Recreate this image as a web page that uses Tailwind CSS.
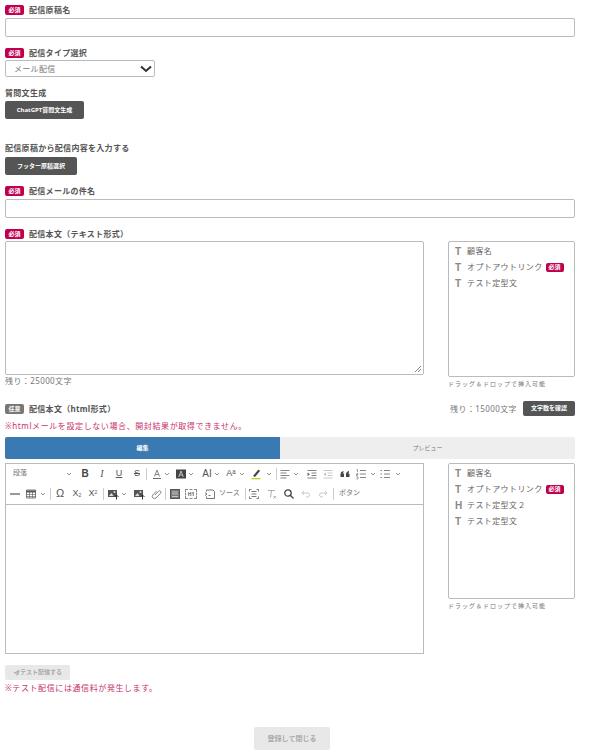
<!DOCTYPE html>
<html lang="ja">
<head>
  <meta charset="UTF-8">
  <meta name="viewport" content="width=device-width, initial-scale=1.0">
  <title>配信原稿</title>
  <script src="https://cdn.jsdelivr.net/npm/@tailwindcss/browser@4"></script>
</head>
<body class="bg-white font-['Noto_Sans','Noto_Sans_CJK_JP',sans-serif] text-[#555]">
  <div class="w-[590px] h-[755px] overflow-hidden pl-[5px] pr-[15px] pt-[5px]">

    <!-- 配信原稿名 -->
    <div class="flex items-center h-[10px]">
      <span class="w-[19px] h-[10px] rounded-[2px] bg-[#c0004e] text-white text-[6px] font-bold leading-[10px] text-center">必須</span>
      <span class="ml-[5px] text-[8px] font-bold text-[#555] tracking-[0.3px]">配信原稿名</span>
    </div>
    <div class="mt-[3px] h-[19px] border border-[#bbb] rounded-[2px]"></div>

    <!-- 配信タイプ選択 -->
    <div class="mt-[11px] flex items-center h-[10px]">
      <span class="w-[19px] h-[10px] rounded-[2px] bg-[#c0004e] text-white text-[6px] font-bold leading-[10px] text-center">必須</span>
      <span class="ml-[5px] text-[8px] font-bold text-[#555] tracking-[0.3px]">配信タイプ選択</span>
    </div>
    <div class="mt-[2px] w-[150px] h-[17px] border border-[#bbb] rounded-[2px] flex items-center justify-between pl-[8px] pr-[2px]">
      <span class="text-[8px] text-[#777] tracking-[0.3px]">メール配信</span>
      <svg width="12" height="8" viewBox="0 0 12 8" fill="none" stroke="#333" stroke-width="2"><polyline points="1,1.5 6,6 11,1.5"/></svg>
    </div>

    <!-- 質問文生成 -->
    <div class="mt-[11px] h-[10px] flex items-center text-[8px] font-bold text-[#555] tracking-[0.3px]">質問文生成</div>
    <div class="mt-[3px] w-[79px] h-[18px] bg-[#555] rounded-[2px] text-white text-[6px] font-bold leading-[18px] text-center">ChatGPT質問文生成</div>

    <!-- フッター -->
    <div class="mt-[24px] h-[10px] flex items-center text-[8px] font-bold text-[#555] tracking-[0.3px]">配信原稿から配信内容を入力する</div>
    <div class="mt-[4px] w-[72px] h-[18px] bg-[#555] rounded-[2px] text-white text-[6px] font-bold leading-[18px] text-center">フッター原稿選択</div>

    <!-- 件名 -->
    <div class="mt-[11px] flex items-center h-[10px]">
      <span class="w-[19px] h-[10px] rounded-[2px] bg-[#c0004e] text-white text-[6px] font-bold leading-[10px] text-center">必須</span>
      <span class="ml-[5px] text-[8px] font-bold text-[#555] tracking-[0.3px]">配信メールの件名</span>
    </div>
    <div class="mt-[3px] h-[19px] border border-[#bbb] rounded-[2px]"></div>

    <!-- 本文 テキスト -->
    <div class="mt-[11px] flex items-center h-[10px]">
      <span class="w-[19px] h-[10px] rounded-[2px] bg-[#c0004e] text-white text-[6px] font-bold leading-[10px] text-center">必須</span>
      <span class="ml-[5px] text-[8px] font-bold text-[#555] tracking-[0.3px]">配信本文（テキスト形式）</span>
    </div>
    <div class="mt-[2px] flex justify-between items-start">
      <div class="w-[419px]">
        <div class="relative h-[134px] border border-[#bbb] rounded-[2px]">
          <svg class="absolute right-[1px] bottom-[1px]" width="8" height="8" viewBox="0 0 8 8" stroke="#666" stroke-width="0.8"><line x1="1" y1="7" x2="7" y2="1"/><line x1="4" y1="7" x2="7" y2="4"/></svg>
        </div>
        <div class="h-[11px] leading-[11px] text-[8px] text-[#777] tracking-[0.4px]">残り：25000文字</div>
      </div>
      <div class="w-[127px]">
        <div class="h-[136px] border border-[#bbb] rounded-[2px] pt-[1px] pl-[6px] text-[8px] text-[#666] tracking-[0.4px]">
          <div class="h-[16px] flex items-center"><span class="w-[12px] text-[10px] font-bold font-['Liberation_Sans'] text-[#888]">T</span><span>顧客名</span></div>
          <div class="h-[16px] flex items-center"><span class="w-[12px] text-[10px] font-bold font-['Liberation_Sans'] text-[#888]">T</span><span>オプトアウトリンク</span><span class="ml-[3px] w-[18px] h-[9px] rounded-[2px] bg-[#c0004e] text-white text-[6px] font-bold leading-[9px] text-center tracking-normal">必須</span></div>
          <div class="h-[16px] flex items-center"><span class="w-[12px] text-[10px] font-bold font-['Liberation_Sans'] text-[#888]">T</span><span>テスト定型文</span></div>
        </div>
        <div class="mt-[3px] h-[9px] leading-[9px] text-[6px] text-[#777] tracking-[1px]">ドラッグ＆ドロップで挿入可能</div>
      </div>
    </div>

    <!-- 本文 html -->
    <div class="mt-[12px] flex items-center justify-between h-[15px]">
      <div class="flex items-center">
        <span class="w-[19px] h-[10px] rounded-[2px] bg-[#777] text-white text-[6px] font-bold leading-[10px] text-center">任意</span>
        <span class="ml-[5px] text-[8px] font-bold text-[#555] tracking-[0.3px]">配信本文（html形式）</span>
      </div>
      <div class="flex items-center">
        <span class="text-[8px] text-[#777] tracking-[0.4px]">残り：15000文字</span>
        <span class="ml-[6px] w-[52px] h-[15px] bg-[#555] rounded-[2px] text-white text-[6px] font-bold leading-[15px] text-center">文字数を確認</span>
      </div>
    </div>
    <div class="mt-[4px] h-[11px] leading-[11px] text-[8px] text-[#c8306c] tracking-[0.6px]">※htmlメールを設定しない場合、開封結果が取得できません。</div>

    <div class="mt-[6px] flex h-[22px] bg-[#eee] rounded-[2px] text-[6px] leading-[22px] text-center">
      <div class="w-[275px] bg-[#3a7ab3] text-white font-bold rounded-l-[2px]">編集</div>
      <div class="flex-1 text-[#777]">プレビュー</div>
    </div>

    <div class="mt-[4px] flex justify-between items-start">
      <!-- エディタ -->
      <div class="w-[419px] h-[191px] border border-[#bbb]">
        <div class="h-[41px] border-b border-[#bbb] text-[#555]">
          <div class="flex items-center h-[19px]">
            <span class="w-[57px] pl-[7px] text-[7px] text-[#777]">段落</span>
            <svg class="ml-[2px] w-[8px] h-[8px]" viewBox="0 0 8 8" fill="none" stroke="#777" stroke-width="0.8"><polyline points="2,3 4,5 6,3"/></svg>
            <b class="ml-[6px] w-[12px] text-center text-[10px] leading-none font-['Liberation_Sans'] text-[#444]">B</b>
            <i class="ml-[5px] w-[12px] text-center text-[10px] leading-none font-['Liberation_Serif']">I</i>
            <u class="ml-[5px] w-[12px] text-center text-[9px] leading-none font-['Liberation_Sans']">U</u>
            <s class="ml-[6px] w-[12px] text-center text-[9px] leading-none font-['Liberation_Sans']">S</s>
            <span class="ml-[3px] w-px h-[12px] bg-[#ccc]"></span>
            <svg class="ml-[4px] w-[12px] h-[12px]" viewBox="0 0 12 12" fill="none" stroke="#666" stroke-width="0.8"><path d="M3.500 8.500 6 2l2.500 6.500M4.300 6.500h3.400"/><path d="M2 10.500h8" stroke="#444"/></svg>
            <svg class="w-[8px] h-[8px]" viewBox="0 0 8 8" fill="none" stroke="#777" stroke-width="0.8"><polyline points="2,3 4,5 6,3"/></svg>
            <svg class="ml-[4px] w-[12px] h-[12px]" viewBox="0 0 12 12"><rect x="1" y="1.500" width="10" height="9" fill="#444"/><path d="M3.700 9 6 3l2.300 6M4.500 7h3" fill="none" stroke="#ddd" stroke-width="0.8"/></svg>
            <svg class="w-[8px] h-[8px]" viewBox="0 0 8 8" fill="none" stroke="#777" stroke-width="0.8"><polyline points="2,3 4,5 6,3"/></svg>
            <span class="ml-[6px] w-[12px] text-center text-[10px] leading-none font-['Liberation_Sans']">AI</span>
            <svg class="w-[8px] h-[8px]" viewBox="0 0 8 8" fill="none" stroke="#777" stroke-width="0.8"><polyline points="2,3 4,5 6,3"/></svg>
            <span class="ml-[4px] w-[12px] text-center text-[9px] leading-none font-['Liberation_Sans']">Aᵃ</span>
            <svg class="ml-[1px] w-[8px] h-[8px]" viewBox="0 0 8 8" fill="none" stroke="#777" stroke-width="0.8"><polyline points="2,3 4,5 6,3"/></svg>
            <svg class="ml-[4px] w-[12px] h-[12px]" viewBox="0 0 12 12"><path d="M3 8 8.500 1.500l1.500 1.500L5 9z" fill="#444"/><path d="M1.500 10.700h9" stroke="#c9cc30" stroke-width="1.300"/></svg>
            <svg class="ml-[3px] w-[8px] h-[8px]" viewBox="0 0 8 8" fill="none" stroke="#777" stroke-width="0.8"><polyline points="2,3 4,5 6,3"/></svg>
            <span class="ml-[3px] w-px h-[12px] bg-[#ccc]"></span>
            <svg class="ml-[2px] w-[12px] h-[12px]" viewBox="0 0 12 12" stroke="#666" stroke-width="0.8"><path d="M1.500 2.500h9M1.500 5h6M1.500 7.500h9M1.500 10h6"/></svg>
            <svg class="ml-[1px] w-[8px] h-[8px]" viewBox="0 0 8 8" fill="none" stroke="#777" stroke-width="0.8"><polyline points="2,3 4,5 6,3"/></svg>
            <svg class="ml-[6px] w-[12px] h-[12px]" viewBox="0 0 12 12" stroke="#666" stroke-width="0.8"><path d="M1.500 2.500h9M5.500 5h5M5.500 7.500h5M1.500 10h9"/><path d="M1.500 4.500 4 6.200 1.500 8z" fill="#666" stroke="none"/></svg>
            <svg class="ml-[4px] w-[12px] h-[12px]" viewBox="0 0 12 12" stroke="#bbb" stroke-width="0.8"><path d="M1.500 2.500h9M5.500 5h5M5.500 7.500h5M1.500 10h9"/><path d="M4 4.500 1.500 6.200 4 8z" fill="#bbb" stroke="none"/></svg>
            <svg class="ml-[5px] w-[12px] h-[12px]" viewBox="0 0 12 12" fill="#444"><path d="M1.500 9V6.500C1.500 4.500 2.500 3.500 4.500 3v1.500c-.7.200-1 .5-1 1h1.500V9zM7 9V6.500C7 4.500 8 3.500 10 3v1.500c-.7.200-1 .5-1 1h1.500V9z"/></svg>
            <svg class="ml-[4px] w-[12px] h-[12px]" viewBox="0 0 12 12" stroke="#666" stroke-width="0.8"><path d="M5 2.500h6M5 6h6M5 9.500h6"/><path d="M1.500 1.500h1v2.500M1.500 5.500h1.500v1H1.500v1.500H3M1.500 9h1.500v2H1.500" fill="none" stroke-width="0.6"/></svg>
            <svg class="ml-[2px] w-[8px] h-[8px]" viewBox="0 0 8 8" fill="none" stroke="#777" stroke-width="0.8"><polyline points="2,3 4,5 6,3"/></svg>
            <svg class="ml-[2px] w-[12px] h-[12px]" viewBox="0 0 12 12" stroke="#666" stroke-width="0.8"><path d="M5 2.500h6M5 6h6M5 9.500h6M1.500 2.500h1.500M1.500 6h1.500M1.500 9.500h1.500"/></svg>
            <svg class="ml-[3px] w-[8px] h-[8px]" viewBox="0 0 8 8" fill="none" stroke="#777" stroke-width="0.8"><polyline points="2,3 4,5 6,3"/></svg>
          </div>
          <div class="flex items-center h-[21px]">
            <svg class="ml-[3px] w-[12px] h-[12px]" viewBox="0 0 12 12" stroke="#555" stroke-width="1.200"><path d="M1 6h10"/></svg>
            <svg class="ml-[4px] w-[12px] h-[12px]" viewBox="0 0 12 12" fill="none" stroke="#555" stroke-width="0.8"><path d="M1.500 2h9v8h-9z"/><path d="M1.500 3.500h9" stroke-width="2"/><path d="M1.500 6.500h9M1.500 8.500h9M4.500 3v7M7.500 3v7" stroke-width="0.6"/></svg>
            <svg class="ml-[2px] w-[8px] h-[8px]" viewBox="0 0 8 8" fill="none" stroke="#777" stroke-width="0.8"><polyline points="2,3 4,5 6,3"/></svg>
            <span class="ml-[3px] w-px h-[12px] bg-[#ccc]"></span>
            <span class="ml-[3px] w-[12px] text-center text-[11px] leading-none font-['Liberation_Sans']">Ω</span>
            <span class="ml-[5px] w-[12px] text-center text-[9px] leading-none font-['Liberation_Sans']">X<sub class="text-[5px]">2</sub></span>
            <span class="ml-[4px] w-[12px] text-center text-[9px] leading-none font-['Liberation_Sans']">X<sup class="text-[5px]">2</sup></span>
            <span class="ml-[4px] w-px h-[12px] bg-[#ccc]"></span>
            <svg class="ml-[3px] w-[12px] h-[12px]" viewBox="0 0 12 12"><path d="M1 2h9v7H1z" fill="#555"/><path d="M2 8 4.500 5l2 3z" fill="#ddd"/><circle cx="7.500" cy="4" r="1" fill="#ddd"/><path d="M9.500 11.500V7M7.500 9l2-2 2 2" fill="none" stroke="#333"/></svg>
            <svg class="ml-[1px] w-[8px] h-[8px]" viewBox="0 0 8 8" fill="none" stroke="#777" stroke-width="0.8"><polyline points="2,3 4,5 6,3"/></svg>
            <svg class="ml-[5px] w-[12px] h-[12px]" viewBox="0 0 12 12"><path d="M1 2h9v7H1z" fill="#555"/><path d="M2 8 4.500 5l2 3z" fill="#ddd"/><circle cx="7.500" cy="4" r="1" fill="#ddd"/><path d="M9.500 11.500V7M7.500 9l2-2 2 2" fill="none" stroke="#333"/></svg>
            <svg class="ml-[5px] w-[12px] h-[12px]" viewBox="0 0 12 12" fill="none" stroke="#666" stroke-width="0.8"><path d="M5 7 8.500 3.200a1.400 1.400 0 0 1 2 2L6 10a2.200 2.200 0 0 1-3.200-3L6.500 3"/></svg>
            <span class="ml-[3px] w-px h-[12px] bg-[#ccc]"></span>
            <svg class="ml-[3px] w-[12px] h-[12px]" viewBox="0 0 12 12" stroke="#444"><rect x="1.500" y="1.500" width="9" height="9" fill="#777" stroke="#555"/><path d="M3 4h6M3 6h6M3 8.500h6" stroke="#ddd" stroke-width="0.8"/></svg>
            <span class="ml-[4px] w-[12px] h-[10px] border border-dashed border-[#888] text-center text-[5px] font-bold leading-[8px]">H1</span>
            <svg class="ml-[7px] w-[12px] h-[12px]" viewBox="0 0 12 12" fill="none" stroke="#555" stroke-width="0.8"><path d="M2.500 3.500V2h6.500l1.500 1.500v7H2.500V8.500"/><path d="M1 4.500 3 6 1 7.500M4.500 7.500h2"/></svg>
            <span class="ml-[3px] w-[21px] text-[7px] text-[#777] whitespace-nowrap">ソース</span>
            <span class="ml-[5px] w-px h-[12px] bg-[#ccc]"></span>
            <svg class="ml-[2px] w-[12px] h-[12px]" viewBox="0 0 12 12" fill="none" stroke="#555" stroke-width="0.8"><path d="M1.500 3.500v-2h2M8.500 1.500h2v2M10.500 8.500v2h-2M3.500 10.500h-2v-2"/><path d="M3.500 3.500h5M3.500 6h5M3.500 8.500h5"/></svg>
            <svg class="ml-[6px] w-[12px] h-[12px]" viewBox="0 0 12 12" fill="none" stroke="#999" stroke-width="0.8"><path d="M2 2.500h7M5.500 2.500 4.500 9.500"/><path d="M7.500 8l2.500 2.500M10 8l-2.500 2.500"/></svg>
            <svg class="ml-[5px] w-[12px] h-[12px]" viewBox="0 0 12 12" fill="none" stroke="#444" stroke-width="1.300"><circle cx="5" cy="5" r="3.200"/><path d="M7.500 7.500 10.500 10.500"/></svg>
            <svg class="ml-[5px] w-[12px] h-[12px]" viewBox="0 0 12 12" fill="none" stroke="#bbb" stroke-width="0.8"><path d="M4 3 2 5l2 2M2 5h5.500a2 2 0 0 1 0 4H6"/></svg>
            <svg class="ml-[5px] w-[12px] h-[12px]" viewBox="0 0 12 12" fill="none" stroke="#bbb" stroke-width="0.8"><path d="M8 3l2 2-2 2M10 5H4.500a2 2 0 0 0 0 4H6"/></svg>
            <span class="ml-[4px] w-px h-[12px] bg-[#ccc]"></span>
            <span class="ml-[5px] text-[7px] text-[#777] whitespace-nowrap">ボタン</span>
          </div>
        </div>
      </div>
      <!-- 挿入タグ -->
      <div class="w-[127px]">
        <div class="h-[136px] border border-[#bbb] rounded-[2px] pt-[1px] pl-[6px] text-[8px] text-[#666] tracking-[0.4px]">
          <div class="h-[16px] flex items-center"><span class="w-[12px] text-[10px] font-bold font-['Liberation_Sans'] text-[#888]">T</span><span>顧客名</span></div>
          <div class="h-[16px] flex items-center"><span class="w-[12px] text-[10px] font-bold font-['Liberation_Sans'] text-[#888]">T</span><span>オプトアウトリンク</span><span class="ml-[3px] w-[18px] h-[9px] rounded-[2px] bg-[#c0004e] text-white text-[6px] font-bold leading-[9px] text-center tracking-normal">必須</span></div>
          <div class="h-[16px] flex items-center"><span class="w-[12px] text-[10px] font-bold font-['Liberation_Sans'] text-[#888]">H</span><span>テスト定型文２</span></div>
          <div class="h-[16px] flex items-center"><span class="w-[12px] text-[10px] font-bold font-['Liberation_Sans'] text-[#888]">T</span><span>テスト定型文</span></div>
        </div>
        <div class="mt-[3px] h-[9px] leading-[9px] text-[6px] text-[#777] tracking-[1px]">ドラッグ＆ドロップで挿入可能</div>
      </div>
    </div>

    <!-- テスト配信 -->
    <div class="mt-[11px] w-[65px] h-[15px] bg-[#e8e8e8] rounded-[2px] flex items-center justify-center text-[6px] font-bold text-[#aaa]">
      <svg class="w-[7px] h-[7px]" viewBox="0 0 8 8" fill="#aaa"><path d="M7.500.5 .5 4.500l2 1L6 2.500 3.500 6v1.500l1.300-1.200 1.200.7z"/></svg>
      <span>テスト配信する</span>
    </div>
    <div class="mt-[2px] h-[11px] leading-[11px] text-[8px] text-[#c8306c] tracking-[0.6px]">※テスト配信には通信料が発生します。</div>

    <div class="mt-[34px] flex justify-center">
      <div class="ml-[4px] w-[76px] h-[23px] bg-[#e8e8e8] rounded-[2px] text-[7px] font-bold leading-[23px] text-[#aaa] text-center">登録して閉じる</div>
    </div>
  </div>
</body>
</html>
